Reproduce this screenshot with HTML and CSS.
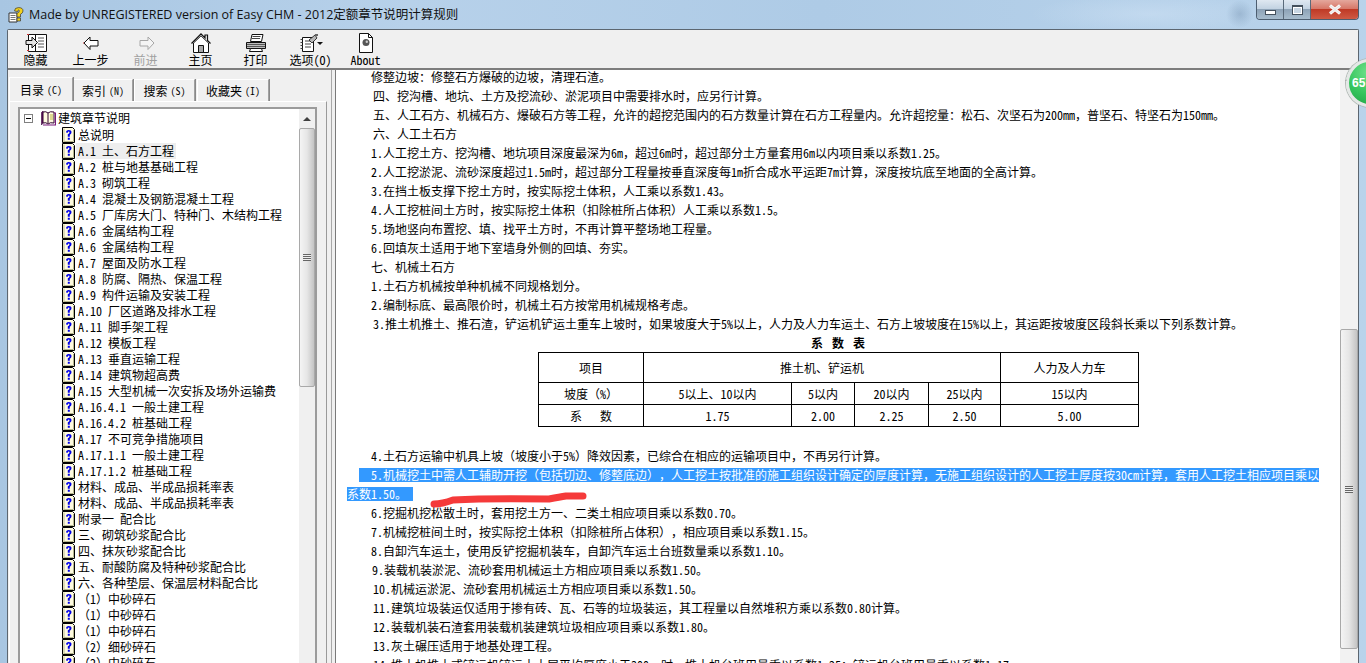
FILE: index.html
```html
<!DOCTYPE html>
<html lang="zh-CN">
<head>
<meta charset="utf-8">
<title>Made by UNREGISTERED version of Easy CHM - 2012定额章节说明计算规则</title>
<link rel="stylesheet" href="styles.css">
</head>
<body>
<svg class="defs" width="0" height="0" aria-hidden="true">
  <symbol id="topic" viewBox="0 0 13 16">
    <path d="M.5.5h10l2 2v13H.5z" fill="#fffbe0" stroke="#000"/>
    <path d="M2 1.500v13M1.500 14.500h10M11.500 3v11" stroke="#b8b890" fill="none"/>
    <path d="M4 5.500Q4 3 6.700 3 9.500 3 9.500 5.300 9.500 7 7.800 7.800V9.700H5.800V7.200Q7.500 6.600 7.500 5.300 7.500 4.600 6.700 4.600 5.900 4.600 5.900 5.800ZM5.800 10.700h2v2h-2z" fill="#0000e8"/>
  </symbol>
</svg>
<header class="titlebar">
  <svg class="app-icon" width="16" height="16" viewBox="0 0 16 16"><path d="M1 6h8v9H1z" fill="#fff" stroke="#333"/><path d="M2.500 8.500h5M2.500 10.500h5M2.500 12.500h5" stroke="#777"/><path d="M6.500 4Q6.500 .6 10.500 .6 15 .6 15 4 15 6 12.500 7.300V10H9V6.300Q11.300 5.500 11.300 4 11.300 3 10.500 3 9.800 3 9.800 4.500Z" fill="#f3d11c" stroke="#333" stroke-width=".7"/><path d="M9 11h3.500v3H9z" fill="#f3d11c" stroke="#333" stroke-width=".7"/></svg>
  <h1 class="title">Made by UNREGISTERED version of Easy CHM - 2012定额章节说明计算规则</h1>
  <div class="controls">
    <span class="ctl ctl-min"><i class="min-glyph"></i></span>
    <span class="ctl ctl-max"><i class="max-glyph"></i></span>
    <span class="ctl ctl-close">
      <svg width="14" height="11" viewBox="0 0 14 11"><path d="M2 1.500 12 9.500M12 1.500 2 9.500" stroke="#fff" stroke-width="3"/><path d="M2 1.500 12 9.500M12 1.500 2 9.500" stroke="#e8e8e8" stroke-width="1.500"/></svg>
    </span>
  </div>
</header>

<main class="client">
  <nav class="toolbar">
    <div class="tool">
      <svg width="24" height="20" viewBox="0 0 24 20"><path d="M4.500 1.500h18v17h-18z" fill="#fff" stroke="#111"/><path d="M11.500 1.500v17" stroke="#111"/><path d="M14 5h6M14 8h6M14 11h6M14 14h6" stroke="#555"/><path d="M2 7.500h6V4l5.500 5.500L8 15v-3.500H2z" fill="#e4e4e4" stroke="#111"/><path d="M3 1h2v1H3zM3 17h2v1H3z" fill="#c33"/></svg>
      <span>隐藏</span>
    </div>
    <div class="tool">
      <svg width="24" height="20" viewBox="0 0 24 20"><path d="M5 10 11 4v3.500h8v5.500h-8v3.500z" fill="#fff" stroke="#111"/><path d="M4 10h1" stroke="#c33"/></svg>
      <span>上一步</span>
    </div>
    <div class="tool tool-off">
      <svg width="24" height="20" viewBox="0 0 24 20"><path d="M20 10 14 4v3.500H6v5.500h8v3.500z" fill="#f4f4f4" stroke="#a6a6a6"/></svg>
      <span>前进</span>
    </div>
    <div class="tool">
      <svg width="24" height="20" viewBox="0 0 24 20"><path d="M2.500 10.500 12 .9l4 4V2h2.500v5.500l3 3" fill="none" stroke="#111" stroke-width="1.200"/><path d="M4.500 10v9.500h15V10L12 2.800z" fill="#fff" stroke="#111"/><path d="M9.500 12.500h5v7h-5z" fill="#a8a8a8" stroke="#111"/></svg>
      <span>主页</span>
    </div>
    <div class="tool">
      <svg width="24" height="20" viewBox="0 0 24 20"><path d="M8 1.500h11l-1.500 7H6.500z" fill="#fff" stroke="#111"/><path d="M8.500 3.500h8M8 5.500h8" stroke="#444"/><path d="M2.500 9.500h19v6h-19z" fill="#bdbdbd" stroke="#111"/><path d="M2.500 11.500h19M2.500 13.500h19" stroke="#111" stroke-width=".6"/><path d="M6.500 15.500h11l1 3h-13z" fill="#fff" stroke="#111"/></svg>
      <span>打印</span>
    </div>
    <div class="tool">
      <svg width="24" height="20" viewBox="0 0 24 20"><path d="M3.500 4.500h11v14h-11z" fill="#fff" stroke="#111"/><path d="M1.500 6.500h2M1.500 9.500h2M1.500 12.500h2M1.500 15.500h2M6 8h6M6 11h6M6 14h6" stroke="#444"/><path d="M10 7l6-5 2 3-5 5z" fill="#b8b8b8" stroke="#111" stroke-width=".8"/><path d="M16 1h3v2h-3z" fill="#666"/><path d="M18 9h6l-3 3z" fill="#111"/></svg>
      <span>选项(O)</span>
    </div>
    <div class="tool">
      <svg width="24" height="20" viewBox="0 0 24 20"><path d="M5.500.5h9l4 4v15h-13z" fill="#fff" stroke="#111"/><path d="M14.500.5v4h4" fill="none" stroke="#111"/><circle cx="12" cy="9.500" r="3.500" fill="#555"/><circle cx="12.800" cy="8.700" r="1.200" fill="#ccc"/></svg>
      <span>About</span>
    </div>
  </nav>

  <div class="panes">
    <aside class="nav">
      <div class="tabs">
        <span class="tab tab-on">目录<small class="key">(C)</small></span>
        <span class="tab tab-2">索引<small class="key">(N)</small></span>
        <span class="tab tab-3">搜索<small class="key">(S)</small></span>
        <span class="tab tab-4">收藏夹<small class="key">(I)</small></span>
      </div>
      <div class="panel">
        <div class="tree">
          <ul class="tree-list">
            <li class="root">
              <i class="minus"></i>
              <svg class="book" width="16" height="16" viewBox="0 0 16 16"><path d="M1.500 2.500 3 1v12l-1.500 2z" fill="#7a1a7a" stroke="#300030" stroke-width=".6"/><path d="M3 2Q6 1 8 3 10 1 14 2v11q-4-1-6 1-2-2-5-1z" fill="#fffbe0" stroke="#300030"/><path d="M14 3h1.500v12H3" fill="none" stroke="#7a1a7a" stroke-width="1.200"/><path d="M8 3v10" stroke="#300030"/><path d="M10 4h3v6h-3z" fill="#ddd890"/></svg>
              <span class="label">建筑章节说明</span>
            </li>
            <li class="row"><svg class="q"><use href="#topic"/></svg><span class="label">总说明</span></li>
            <li class="row"><svg class="q"><use href="#topic"/></svg><span class="label label-on">A.1 土、石方工程</span></li>
            <li class="row"><svg class="q"><use href="#topic"/></svg><span class="label">A.2 桩与地基基础工程</span></li>
            <li class="row"><svg class="q"><use href="#topic"/></svg><span class="label">A.3 砌筑工程</span></li>
            <li class="row"><svg class="q"><use href="#topic"/></svg><span class="label">A.4 混凝土及钢筋混凝土工程</span></li>
            <li class="row"><svg class="q"><use href="#topic"/></svg><span class="label">A.5 厂库房大门、特种门、木结构工程</span></li>
            <li class="row"><svg class="q"><use href="#topic"/></svg><span class="label">A.6 金属结构工程</span></li>
            <li class="row"><svg class="q"><use href="#topic"/></svg><span class="label">A.6 金属结构工程</span></li>
            <li class="row"><svg class="q"><use href="#topic"/></svg><span class="label">A.7 屋面及防水工程</span></li>
            <li class="row"><svg class="q"><use href="#topic"/></svg><span class="label">A.8 防腐、隔热、保温工程</span></li>
            <li class="row"><svg class="q"><use href="#topic"/></svg><span class="label">A.9 构件运输及安装工程</span></li>
            <li class="row"><svg class="q"><use href="#topic"/></svg><span class="label">A.10 厂区道路及排水工程</span></li>
            <li class="row"><svg class="q"><use href="#topic"/></svg><span class="label">A.11 脚手架工程</span></li>
            <li class="row"><svg class="q"><use href="#topic"/></svg><span class="label">A.12 模板工程</span></li>
            <li class="row"><svg class="q"><use href="#topic"/></svg><span class="label">A.13 垂直运输工程</span></li>
            <li class="row"><svg class="q"><use href="#topic"/></svg><span class="label">A.14 建筑物超高费</span></li>
            <li class="row"><svg class="q"><use href="#topic"/></svg><span class="label">A.15 大型机械一次安拆及场外运输费</span></li>
            <li class="row"><svg class="q"><use href="#topic"/></svg><span class="label">A.16.4.1 一般土建工程</span></li>
            <li class="row"><svg class="q"><use href="#topic"/></svg><span class="label">A.16.4.2 桩基础工程</span></li>
            <li class="row"><svg class="q"><use href="#topic"/></svg><span class="label">A.17 不可竞争措施项目</span></li>
            <li class="row"><svg class="q"><use href="#topic"/></svg><span class="label">A.17.1.1 一般土建工程</span></li>
            <li class="row"><svg class="q"><use href="#topic"/></svg><span class="label">A.17.1.2 桩基础工程</span></li>
            <li class="row"><svg class="q"><use href="#topic"/></svg><span class="label">材料、成品、半成品损耗率表</span></li>
            <li class="row"><svg class="q"><use href="#topic"/></svg><span class="label">材料、成品、半成品损耗率表</span></li>
            <li class="row"><svg class="q"><use href="#topic"/></svg><span class="label">附录一 配合比</span></li>
            <li class="row"><svg class="q"><use href="#topic"/></svg><span class="label">三、砌筑砂浆配合比</span></li>
            <li class="row"><svg class="q"><use href="#topic"/></svg><span class="label">四、抹灰砂浆配合比</span></li>
            <li class="row"><svg class="q"><use href="#topic"/></svg><span class="label">五、耐酸防腐及特种砂浆配合比</span></li>
            <li class="row"><svg class="q"><use href="#topic"/></svg><span class="label">六、各种垫层、保温层材料配合比</span></li>
            <li class="row"><svg class="q"><use href="#topic"/></svg><span class="label">（1）中砂碎石</span></li>
            <li class="row"><svg class="q"><use href="#topic"/></svg><span class="label">（1）中砂碎石</span></li>
            <li class="row"><svg class="q"><use href="#topic"/></svg><span class="label">（1）中砂碎石</span></li>
            <li class="row"><svg class="q"><use href="#topic"/></svg><span class="label">（2）细砂碎石</span></li>
            <li class="row"><svg class="q"><use href="#topic"/></svg><span class="label">（2）中砂碎石</span></li>
          </ul>
          <div class="sb sb-tree">
            <div class="sb-arrow sb-arrow-tree"><i class="up"></i></div>
            <div class="sb-thumb sb-thumb-tree"><i class="grip"></i></div>
          </div>
        </div>
      </div>
    </aside>

    <section class="content">
      <article class="doc">
        <p>修整边坡：修整石方爆破的边坡，清理石渣。</p>
        <p class="in2">四、挖沟槽、地坑、土方及挖流砂、淤泥项目中需要排水时，应另行计算。</p>
        <p class="in2">五、人工石方、机械石方、爆破石方等工程，允许的超挖范围内的石方数量计算在石方工程量内。允许超挖量：松石、次坚石为200mm，普坚石、特坚石为150mm。</p>
        <p class="in2">六、人工土石方</p>
        <p>1.人工挖土方、挖沟槽、地坑项目深度最深为6m，超过6m时，超过部分土方量套用6m以内项目乘以系数1.25。</p>
        <p>2.人工挖淤泥、流砂深度超过1.5m时，超过部分工程量按垂直深度每1m折合成水平运距7m计算，深度按坑底至地面的全高计算。</p>
        <p>3.在挡土板支撑下挖土方时，按实际挖土体积，人工乘以系数1.43。</p>
        <p>4.人工挖桩间土方时，按实际挖土体积（扣除桩所占体积）人工乘以系数1.5。</p>
        <p>5.场地竖向布置挖、填、找平土方时，不再计算平整场地工程量。</p>
        <p>6.回填灰土适用于地下室墙身外侧的回填、夯实。</p>
        <p>七、机械土石方</p>
        <p>1.土石方机械按单种机械不同规格划分。</p>
        <p>2.编制标底、最高限价时，机械土石方按常用机械规格考虑。</p>
        <p class="in2">3.推土机推土、推石渣，铲运机铲运土重车上坡时，如果坡度大于5%以上，人力及人力车运土、石方上坡坡度在15%以上，其运距按坡度区段斜长乘以下列系数计算。</p>
        <h2 class="cap">系 数 表</h2>
        <table class="coef">
          <colgroup><col class="c1"><col class="c2"><col class="c3"><col class="c4"><col class="c5"><col class="c6"></colgroup>
          <tr class="r1"><td>项目</td><td colspan="4">推土机、铲运机</td><td>人力及人力车</td></tr>
          <tr class="r2"><td>坡度（%）</td><td>5以上、10以内</td><td>5以内</td><td>20以内</td><td>25以内</td><td>15以内</td></tr>
          <tr class="r2"><td>系&nbsp;&nbsp;&nbsp;数</td><td>1.75</td><td>2.00</td><td>2.25</td><td>2.50</td><td>5.00</td></tr>
        </table>
        <p class="after">4.土石方运输中机具上坡（坡度小于5%）降效因素，已综合在相应的运输项目中，不再另行计算。</p>
        <p class="sel-line"><span class="sel">5.机械挖土中需人工辅助开挖（包括切边、修整底边），人工挖土按批准的施工组织设计确定的厚度计算，无施工组织设计的人工挖土厚度按30cm计算，套用人工挖土相应项目乘以系数1.50。&nbsp;</span></p>
        <p>6.挖掘机挖松散土时，套用挖土方一、二类土相应项目乘以系数0.70。</p>
        <p>7.机械挖桩间土时，按实际挖土体积（扣除桩所占体积），相应项目乘以系数1.15。</p>
        <p>8.自卸汽车运土，使用反铲挖掘机装车，自卸汽车运土台班数量乘以系数1.10。</p>
        <p class="in1">9.装载机装淤泥、流砂套用机械运土方相应项目乘以系数1.50。</p>
        <p class="in2">10.机械运淤泥、流砂套用机械运土方相应项目乘以系数1.50。</p>
        <p class="in2">11.建筑垃圾装运仅适用于掺有砖、瓦、石等的垃圾装运，其工程量以自然堆积方乘以系数0.80计算。</p>
        <p class="in2">12.装载机装石渣套用装载机装建筑垃圾相应项目乘以系数1.80。</p>
        <p class="in2">13.灰土碾压适用于地基处理工程。</p>
        <p class="in2">14.推土机推土或铲运机铲运土土层平均厚度小于300mm时，推土机台班用量乘以系数1.25；铲运机台班用量乘以系数1.17。</p>
      </article>
      <div class="sb sb-doc">
        <div class="sb-arrow sb-arrow-doc"><i class="up"></i></div>
        <div class="sb-track"></div>
        <div class="sb-thumb sb-thumb-doc"><i class="grip"></i></div>
      </div>
    </section>
  </div>
</main>

<svg class="scribble" width="170" height="20" viewBox="0 0 170 20" aria-hidden="true"><path d="M6 15Q14 15 25 11 60 9 121 10 132 8 138 7L155 7" fill="none" stroke="#f53a3a" stroke-width="7" stroke-linecap="round" stroke-linejoin="round"/></svg>
<div class="badge"><span>65</span></div>
</body>
</html>
```

FILE: styles.css
```css
* { box-sizing: border-box; }

html, body {
  margin: 0;
  width: 1366px;
  height: 663px;
  overflow: hidden;
}

body {
  position: relative;
  background:
    radial-gradient(circle at 1240px 14px, rgba(120, 150, 180, .45) 0, rgba(120, 150, 180, 0) 14px),
    radial-gradient(ellipse 120px 20px at 1150px 14px, rgba(220, 235, 250, .35), rgba(220, 235, 250, 0)),
    linear-gradient(90deg, #a8c6e2 0, #b7d1ea 30%, #aecbe6 60%, #b9d3eb 100%);
  font-family: "Noto Sans Mono CJK SC", "Noto Sans CJK SC", "Liberation Mono", sans-serif;
  font-size: 12px;
  text-spacing-trim: space-all;
  color: #000;
}

.defs { position: absolute; }

/* title bar */
.titlebar {
  display: flex;
  align-items: flex-start;
  height: 29px;
  padding-left: 8px;
}

.app-icon { margin-top: 7px; flex: none; }

.title {
  margin: 6px 0 0 5px;
  font-family: "Open Sans", "Noto Sans CJK SC", sans-serif;
  font-size: 12.500px;
  line-height: 18px;
  font-weight: 400;
  color: #111;
  white-space: nowrap;
}

.controls {
  display: flex;
  margin-left: auto;
  margin-right: 7px;
  height: 20px;
  border: 1px solid #4d5e70;
  border-top: 0;
  border-radius: 0 0 4px 4px;
  overflow: hidden;
}

.ctl {
  display: flex;
  align-items: center;
  justify-content: center;
  height: 19px;
  border-right: 1px solid #5a6a7a;
}

.ctl-min, .ctl-max {
  width: 27px;
  background: linear-gradient(#dfe8f1 0, #c3d3e2 45%, #8ea3b7 50%, #a7bccd 100%);
}

.ctl-close {
  width: 47px;
  border-right: 0;
  background: linear-gradient(#e4a79c 0, #d77869 45%, #bf3a26 50%, #cf5a44 100%);
}

.min-glyph {
  width: 11px;
  height: 5px;
  margin-top: 6px;
  background: #fff;
  border: 1px solid #44505c;
}

.max-glyph {
  width: 11px;
  height: 10px;
  border: 1px solid #44505c;
  border-top-width: 2px;
  background: #c8d6e3;
  box-shadow: inset 0 0 0 1px #fff;
}

/* window client */
.client {
  display: flex;
  flex-direction: column;
  width: 1352px;
  height: 634px;
  margin-left: 7px;
  background: #f0f0f0;
  border: 1px solid #5c6670;
  border-bottom: 0;
  border-radius: 2px 2px 0 0;
}

.toolbar {
  display: flex;
  flex: none;
  height: 40px;
  padding-left: 0;
  border-bottom: 2px solid #7d7d7d;
  background: #f0f0f0;
}

.tool {
  display: flex;
  flex-direction: column;
  align-items: center;
  width: 55px;
  padding-top: 3px;
  line-height: 14px;
  white-space: nowrap;
}

.tool svg { flex: none; }

.tool-off { color: #a0a0a0; }

.panes {
  display: flex;
  flex: 1;
  min-height: 0;
}

/* left pane */
.nav {
  flex: none;
  width: 324px;
  padding: 7px 4px 0 1px;
  border-right: 1px solid #a8a8a8;
  margin-right: 3px;
  display: flex;
  flex-direction: column;
}

.tabs {
  display: flex;
  align-items: flex-end;
  height: 24px;
  flex: none;
}

.tab {
  display: flex;
  align-items: center;
  justify-content: center;
  height: 22px;
  line-height: 20px;
  border: 1px solid #a0a0a0;
  border-bottom: 0;
  border-top-color: #fff;
  border-left-color: #fff;
  box-shadow: 1px 0 0 #888;
  white-space: nowrap;
}

.key {
  margin-left: 3px;
  font-size: 10px;
}

.tab-on { width: 64px; height: 24px; position: relative; border-top-color: #fff; }
.tab-2 { width: 60px; margin-right: 1px; }
.tab-3 { width: 61px; margin-right: 2px; }
.tab-4 { width: 72px; }

.panel {
  flex: 1;
  min-height: 0;
  padding: 5px 9px 0 8px;
  border-top: 1px solid #fff;
  border-left: 1px solid #fff;
  border-right: 1px solid #9a9a9a;
}

.tree {
  display: flex;
  height: 100%;
  background: #fff;
  border: 2px solid #9b9b9b;
  border-bottom: 0;
}

.tree-list {
  flex: 1;
  min-width: 0;
  margin: 0;
  padding: 1px 0 0;
  list-style: none;
  overflow: hidden;
}

.root, .row {
  display: flex;
  align-items: center;
  height: 16px;
  line-height: 16px;
  white-space: nowrap;
}

.root { padding-left: 4px; margin-bottom: 1px; }
.row { padding-left: 42px; }

.minus {
  position: relative;
  width: 9px;
  height: 9px;
  margin-right: 7px;
  border: 1px solid #808080;
  background: linear-gradient(#000, #000) center / 5px 1px no-repeat #fff;
}

.book { flex: none; margin-right: 1px; }
.root .label { padding-left: 1px; }

.q { width: 13px; height: 16px; flex: none; margin-right: 1px; }

.label { padding: 0 2px; }
.label-on { background: #eeeeee; }

/* scrollbars */
.sb {
  display: flex;
  flex-direction: column;
  flex: none;
  background: #f0f0f0;
}

.sb-tree { width: 16px; }
.sb-doc { width: 18px; background: #f2f2f2; }

.sb-arrow {
  display: flex;
  align-items: center;
  justify-content: center;
  flex: none;
}

.sb-arrow-tree { height: 19px; }
.sb-arrow-doc { height: 17px; }

.up {
  width: 0;
  height: 0;
  border: 4px solid transparent;
  border-top: 0;
  border-bottom: 4px solid #404040;
}

.sb-thumb {
  display: flex;
  align-items: center;
  justify-content: center;
  flex: none;
  border: 1px solid #a9a9a9;
  border-radius: 2px;
  background: linear-gradient(90deg, #f4f4f4 0, #e6e6e6 50%, #c4c4c4 100%);
}

.sb-thumb-tree { height: 259px; }
.sb-thumb-doc { height: 320px; }

.sb-track { height: 242px; flex: none; }

.grip {
  width: 8px;
  height: 7px;
  background: repeating-linear-gradient(#666 0 1px, #eee 1px 2px);
}

/* document */
.content {
  display: flex;
  flex: 1;
  min-width: 0;
  background: #fff;
  border-left: 1px solid #7a7a7a;
  overflow: hidden;
}

.doc {
  flex: 1;
  min-width: 0;
  margin-top: -3px;
  padding: 0 15px 0 11px;
  overflow: hidden;
}

.doc p {
  margin: 0;
  line-height: 19px;
  text-indent: 24px;
}

.doc p.in1 { text-indent: 25px; }
.doc p.in2 { text-indent: 26px; }

.doc .after { margin-top: 19px; }

.doc .sel-line { text-indent: 12px; }

.sel {
  padding-left: 12px;
  color: #fff;
  background: linear-gradient(#3399ff, #3399ff) 0 50% / 100% 14px no-repeat;
}

.cap {
  width: 600px;
  margin: 0 0 0 191px;
  font-size: 12px;
  line-height: 19px;
  font-weight: 700;
  text-align: center;
  word-spacing: 3px;
}

.coef {
  width: 601px;
  margin-left: 191px;
  table-layout: fixed;
  border-collapse: collapse;
}

.coef td {
  padding: 0;
  border: 1px solid #000;
  text-align: center;
  line-height: 16px;
}

.r1 td { height: 30px; }
.r2 td { height: 22px; }

.c1 { width: 105px; }
.c2 { width: 148px; }
.c3 { width: 63px; }
.c4 { width: 74px; }
.c5 { width: 72px; }
.c6 { width: 138px; }

/* overlays */
.scribble {
  position: absolute;
  left: 428px;
  top: 489px;
}

.badge {
  position: absolute;
  left: 1346px;
  top: 59px;
  display: flex;
  align-items: center;
  width: 48px;
  height: 48px;
  padding-left: 3px;
  border: 3px solid #e4e8e6;
  border-radius: 50%;
  background: radial-gradient(circle at 45% 25%, #6fe08a 0, #34c45c 55%, #1f9e45 100%);
  box-shadow: 0 0 0 1px #b0b8b4;
  font-family: "Liberation Sans", sans-serif;
  font-size: 12px;
  font-weight: 700;
  color: #fff;
}
```
